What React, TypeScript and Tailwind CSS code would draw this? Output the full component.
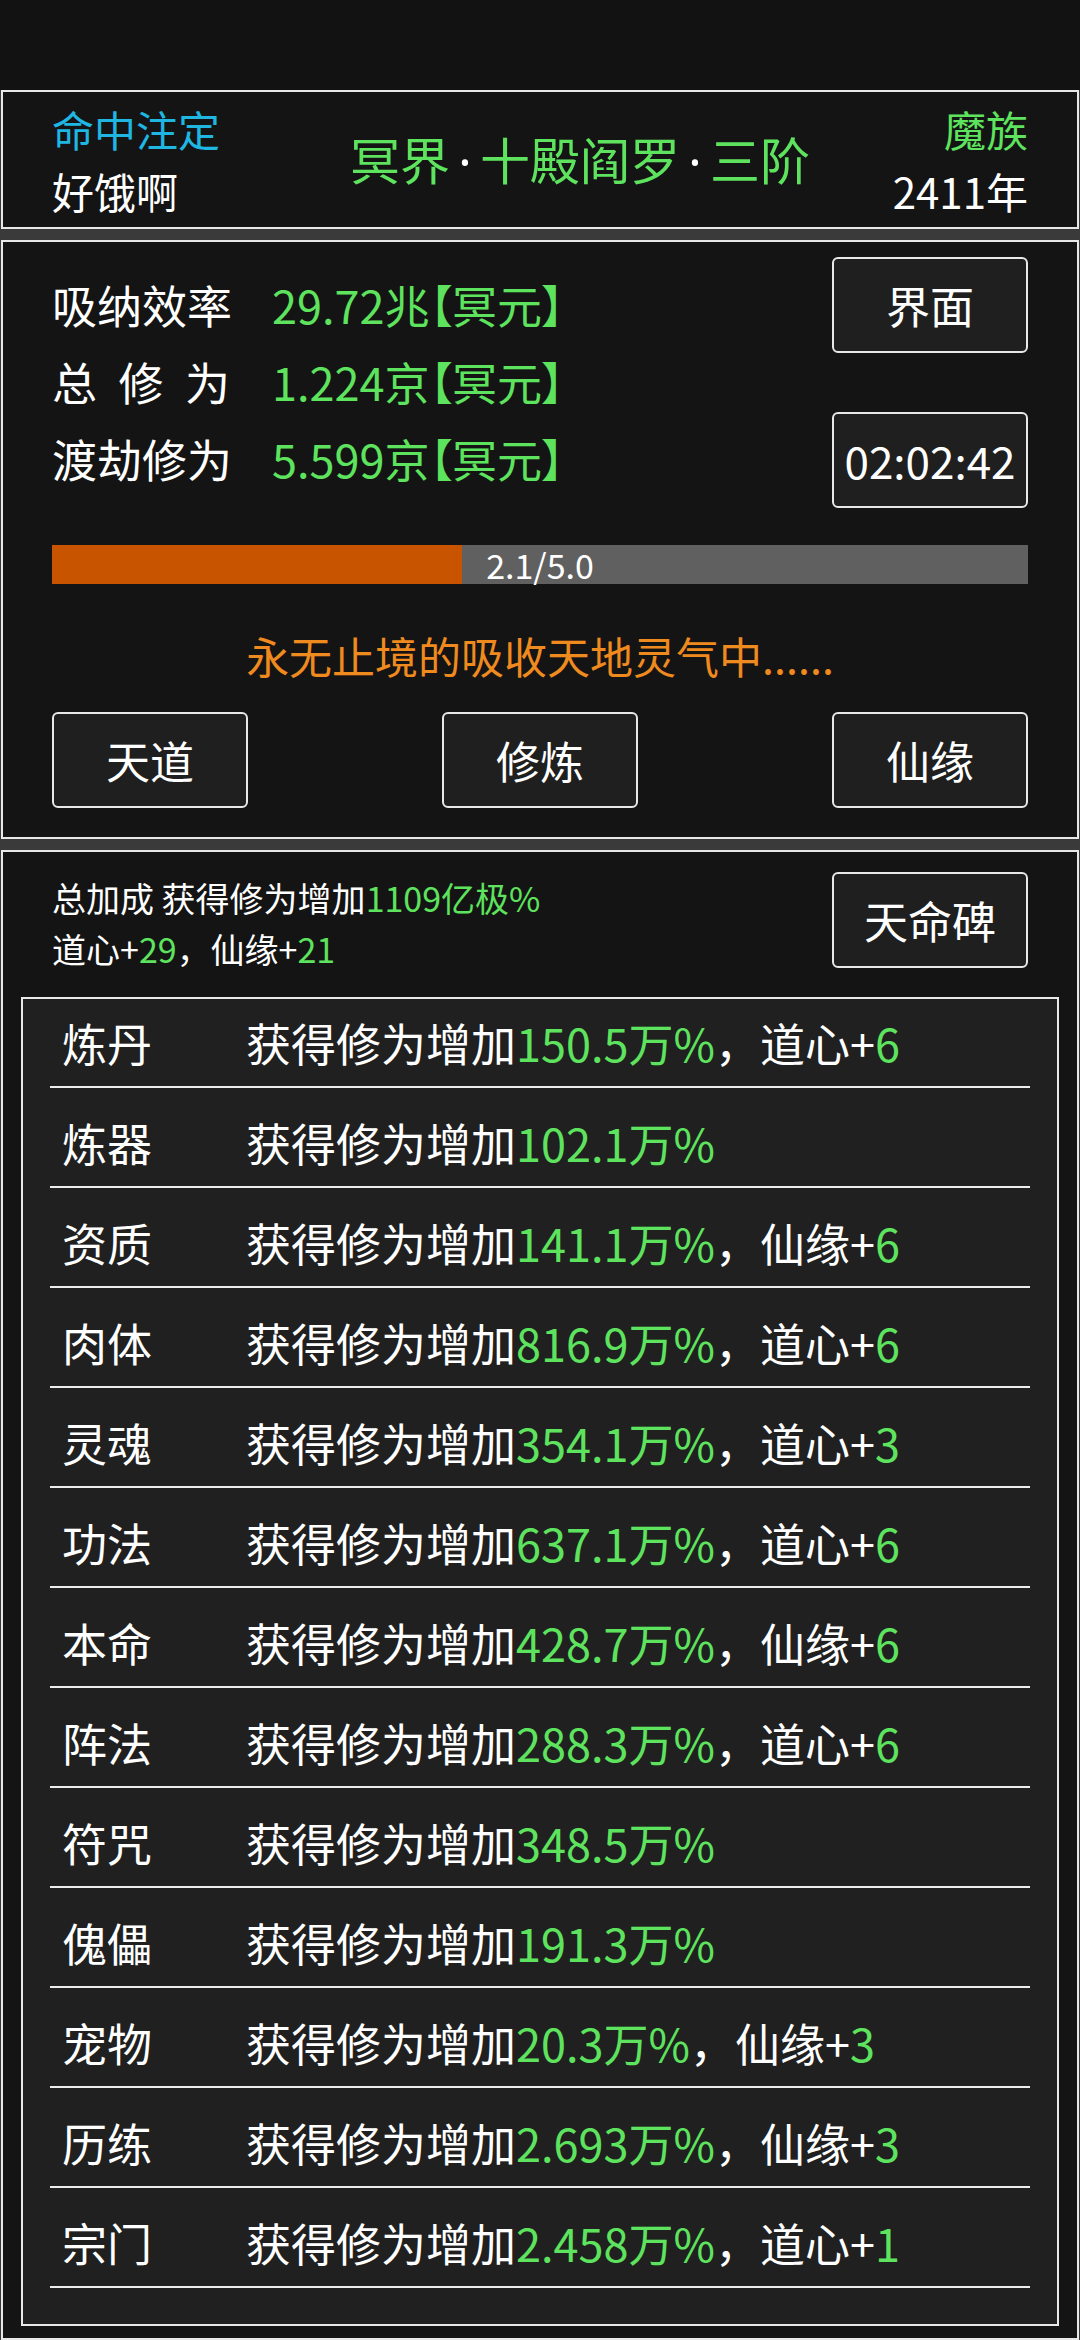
const GREEN = "text-[#5ee35e]";

type Bonus = { name: string; pct: string; extra?: [string, string] };

const bonuses: Bonus[] = [
  { name: "炼丹", pct: "150.5万%", extra: ["道心", "6"] },
  { name: "炼器", pct: "102.1万%" },
  { name: "资质", pct: "141.1万%", extra: ["仙缘", "6"] },
  { name: "肉体", pct: "816.9万%", extra: ["道心", "6"] },
  { name: "灵魂", pct: "354.1万%", extra: ["道心", "3"] },
  { name: "功法", pct: "637.1万%", extra: ["道心", "6"] },
  { name: "本命", pct: "428.7万%", extra: ["仙缘", "6"] },
  { name: "阵法", pct: "288.3万%", extra: ["道心", "6"] },
  { name: "符咒", pct: "348.5万%" },
  { name: "傀儡", pct: "191.3万%" },
  { name: "宠物", pct: "20.3万%", extra: ["仙缘", "3"] },
  { name: "历练", pct: "2.693万%", extra: ["仙缘", "3"] },
  { name: "宗门", pct: "2.458万%", extra: ["道心", "1"] },
];

function GameButton({ children }: { children: React.ReactNode }) {
  return (
    <button className="flex h-[96px] w-[196px] items-center justify-center rounded-[6px] border-2 border-[#e8e8e8] bg-[#1f1f1f] text-[44px] leading-none text-white">
      {children}
    </button>
  );
}

function Dot() {
  return (
    <span className="inline-block w-[30px] text-center font-['Noto_Sans',sans-serif] text-white">·</span>
  );
}

function StatRow({ label, value }: { label: React.ReactNode; value: string }) {
  return (
    <div className="flex h-[77px] items-center text-[45px] leading-none">
      <div className="w-[220px] text-white">{label}</div>
      <div className={GREEN + " [font-feature-settings:'palt']"}>
        {value}
        <span>【冥元】</span>
      </div>
    </div>
  );
}

export default function App() {
  const progress = 2.1 / 5.0;

  return (
    <div className="flex h-[2340px] w-[1080px] flex-col bg-[#3a3a3a] font-['Noto_Sans_CJK_SC','Noto_Sans',sans-serif]">
      <div className="h-[90px] bg-[#121212]" />

      {/* header */}
      <div className="mx-px flex h-[139px] items-center border-2 border-[#e8e8e8] bg-[#141414] pl-[49px] pr-[49px]">
        <div className="flex w-[168px] flex-col pt-[1px] text-[42px] leading-[62px]">
          <span className="text-[#1fb6e2]">命中注定</span>
          <span className="text-white">好饿啊</span>
        </div>
        <div className={"ml-[130px] text-[50px] leading-none " + GREEN}>
          冥界<Dot />十殿阎罗<Dot />三阶
        </div>
        <div className="ml-auto flex flex-col items-end pt-[1px] text-[42px] leading-[62px]">
          <span className={GREEN}>魔族</span>
          <span className="text-white">2411年</span>
        </div>
      </div>

      {/* cultivation panel */}
      <div className="mx-px mt-[11px] flex flex-col border-2 border-[#e8e8e8] bg-[#141414] px-[49px] pb-[29px] pt-[15px]">
        <div className="flex items-start justify-between">
          <div className="mt-[9px] flex flex-col">
            <StatRow label="吸纳效率" value="29.72兆" />
            <StatRow
              label={
                <span className="flex w-[178px] justify-between">
                  <span>总</span>
                  <span>修</span>
                  <span>为</span>
                </span>
              }
              value="1.224京"
            />
            <StatRow label="渡劫修为" value="5.599京" />
          </div>
          <div className="flex flex-col gap-[59px]">
            <GameButton>界面</GameButton>
            <GameButton>02:02:42</GameButton>
          </div>
        </div>

        <div className="relative mt-[37px] flex h-[39px] items-center justify-center bg-[#606060]">
          <div className="absolute inset-y-0 left-0 bg-[#c85400]" style={{ width: `${progress * 100}%` }} />
          <span className="relative text-[34px] leading-none text-white">2.1/5.0</span>
        </div>

        <div className="mt-[41px] text-center text-[43px] leading-[60px] text-[#ef8a1f]">永无止境的吸收天地灵气中......</div>

        <div className="mt-[27px] flex justify-between">
          <GameButton>天道</GameButton>
          <GameButton>修炼</GameButton>
          <GameButton>仙缘</GameButton>
        </div>
      </div>

      {/* bonus panel */}
      <div className="mx-px mt-[11px] flex flex-1 flex-col border-2 border-b-0 border-[#e8e8e8] bg-[#141414] pt-[20px]">
        <div className="flex items-start justify-between px-[49px]">
          <div className="flex flex-col text-[34px] leading-[51px] text-white">
            <div>
              总加成 获得修为增加<span className={GREEN}>1109亿极%</span>
            </div>
            <div>
              道心+<span className={GREEN}>29</span>，仙缘+<span className={GREEN}>21</span>
            </div>
          </div>
          <GameButton>天命碑</GameButton>
        </div>

        <div className="mx-[18px] mt-[23px] border-2 border-[#e8e8e8] bg-[#202020] px-[27px] pb-[36px]">
          {bonuses.map((b, i) => (
            <div
              key={b.name}
              className={
                "flex border-b-2 border-[#ececec] pb-[13px] pl-[12px] text-[45px] leading-[60px] text-white " +
                (i === 0 ? "pt-[14px]" : "pt-[25px]")
              }
            >
              <span className="w-[184px]">{b.name}</span>
              <span>
                获得修为增加<span className={GREEN}>{b.pct}</span>
                {b.extra ? (
                  <>
                    ，{b.extra[0]}+<span className={GREEN}>{b.extra[1]}</span>
                  </>
                ) : null}
              </span>
            </div>
          ))}
        </div>
      </div>
      <div className="mx-px h-[2px] bg-[#e8e8e8]" />
    </div>
  );
}
